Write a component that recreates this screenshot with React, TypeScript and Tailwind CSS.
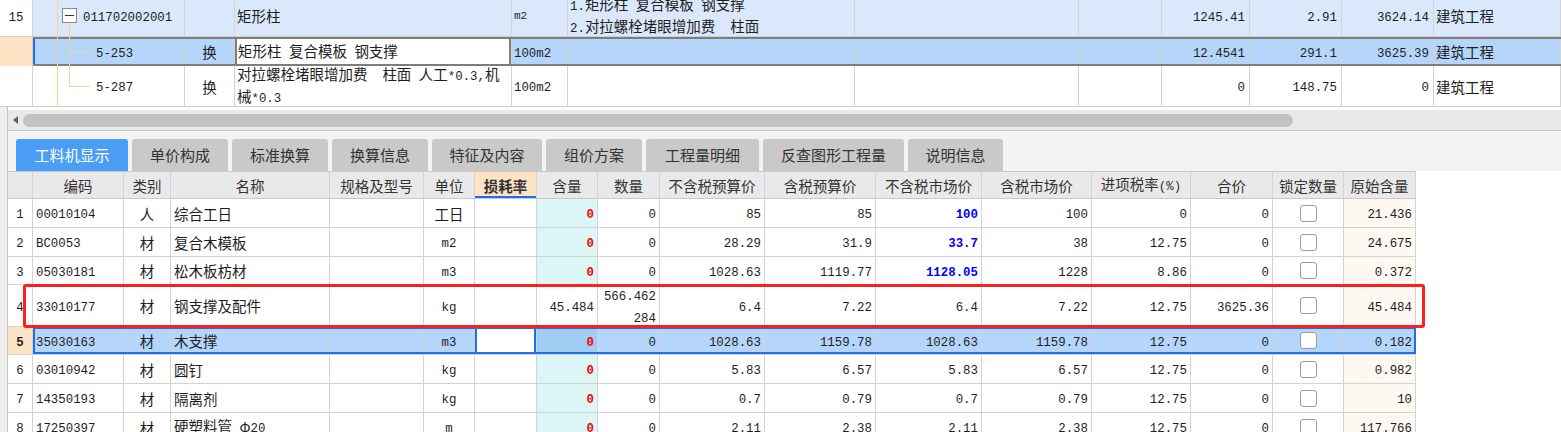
import React from "react";
import clsx from "clsx";

const ASCII = /^[\x20-\x7E]+$/;

function Txt({ s, bold }: { s: string; bold?: boolean }) {
  const parts = s.split(/([\x20-\x7E]+)/).filter((p) => p !== "");
  return (
    <span className={clsx(bold && "font-bold")}>
      {parts.map((p, i) =>
        ASCII.test(p) ? (
          <span
            key={i}
            className="whitespace-pre font-['Liberation_Mono',monospace] text-[12.4px]"
          >
            {p}
          </span>
        ) : (
          <span key={i} className="text-[14.5px]">
            {p}
          </span>
        ),
      )}
    </span>
  );
}

// top grid column widths
const TW = [
  "w-[33px]",
  "w-[152px]",
  "w-[50px]",
  "w-[277px]",
  "w-[56px]",
  "w-[287px]",
  "w-[224px]",
  "w-[83px]",
  "w-[88px]",
  "w-[92px]",
  "w-[92px]",
  "w-[127px]",
];

// bottom grid column widths
const BW = [
  "w-[25px]",
  "w-[91px]",
  "w-[47px]",
  "w-[159px]",
  "w-[94px]",
  "w-[51px]",
  "w-[62px]",
  "w-[61px]",
  "w-[62px]",
  "w-[105px]",
  "w-[111px]",
  "w-[106px]",
  "w-[110px]",
  "w-[99px]",
  "w-[82px]",
  "w-[71px]",
  "w-[72px]",
];

function Cell({
  w,
  className,
  children,
}: {
  w: string;
  className?: string;
  children?: React.ReactNode;
}) {
  return (
    <div
      className={clsx(
        "flex h-full shrink-0 items-center border-r border-[#d3d3d3] leading-[18px]",
        w,
        className,
      )}
    >
      {children}
    </div>
  );
}

const headers = [
  "",
  "编码",
  "类别",
  "名称",
  "规格及型号",
  "单位",
  "损耗率",
  "含量",
  "数量",
  "不含税预算价",
  "含税预算价",
  "不含税市场价",
  "含税市场价",
  "进项税率(%)",
  "合价",
  "锁定数量",
  "原始含量",
];

type Mat = {
  no: string;
  code: string;
  kind: string;
  name: string;
  unit: string;
  content: string;
  qty: string[];
  a: string;
  b: string;
  c: string;
  d: string;
  rate: string;
  total: string;
  orig: string;
  h: string;
  blue?: boolean;
  plain?: boolean;
  sel?: boolean;
};

const mats: Mat[] = [
  { no: "1", code: "00010104", kind: "人", name: "综合工日", unit: "工日", content: "0", qty: ["0"], a: "85", b: "85", c: "100", d: "100", rate: "0", total: "0", orig: "21.436", h: "h-[29px]", blue: true },
  { no: "2", code: "BC0053", kind: "材", name: "复合木模板", unit: "m2", content: "0", qty: ["0"], a: "28.29", b: "31.9", c: "33.7", d: "38", rate: "12.75", total: "0", orig: "24.675", h: "h-[29px]", blue: true },
  { no: "3", code: "05030181", kind: "材", name: "松木板枋材", unit: "m3", content: "0", qty: ["0"], a: "1028.63", b: "1119.77", c: "1128.05", d: "1228", rate: "8.86", total: "0", orig: "0.372", h: "h-[28px]", blue: true },
  { no: "4", code: "33010177", kind: "材", name: "钢支撑及配件", unit: "kg", content: "45.484", qty: ["566.462", "284"], a: "6.4", b: "7.22", c: "6.4", d: "7.22", rate: "12.75", total: "3625.36", orig: "45.484", h: "h-[42px]", plain: true },
  { no: "5", code: "35030163", kind: "材", name: "木支撑", unit: "m3", content: "0", qty: ["0"], a: "1028.63", b: "1159.78", c: "1028.63", d: "1159.78", rate: "12.75", total: "0", orig: "0.182", h: "h-[28px]", sel: true },
  { no: "6", code: "03010942", kind: "材", name: "圆钉", unit: "kg", content: "0", qty: ["0"], a: "5.83", b: "6.57", c: "5.83", d: "6.57", rate: "12.75", total: "0", orig: "0.982", h: "h-[29px]" },
  { no: "7", code: "14350193", kind: "材", name: "隔离剂", unit: "kg", content: "0", qty: ["0"], a: "0.7", b: "0.79", c: "0.7", d: "0.79", rate: "12.75", total: "0", orig: "10", h: "h-[29px]" },
  { no: "8", code: "17250397", kind: "材", name: "硬塑料管 φ20", unit: "m", content: "0", qty: ["0"], a: "2.11", b: "2.38", c: "2.11", d: "2.38", rate: "12.75", total: "0", orig: "117.766", h: "h-[29px]" },
];

const tabs = [
  ["工料机显示", "w-[112px]"],
  ["单价构成", "w-[96px]"],
  ["标准换算", "w-[96px]"],
  ["换算信息", "w-[96px]"],
  ["特征及内容", "w-[110px]"],
  ["组价方案", "w-[96px]"],
  ["工程量明细", "w-[113px]"],
  ["反查图形工程量", "w-[141px]"],
  ["说明信息", "w-[95px]"],
];

function Check() {
  return (
    <span className="h-[17px] w-[17px] rounded-[3px] border border-[#9b9b9b] bg-white" />
  );
}

function MatCells({ m }: { m: Mat }) {
  const num = "justify-end pr-[3px]";
  return (
    <>
      <Cell w={BW[1]} className="pl-[3px]">
        <Txt s={m.code} />
      </Cell>
      <Cell w={BW[2]} className="justify-center">
        <Txt s={m.kind} />
      </Cell>
      <Cell w={BW[3]} className="pl-[3px]">
        <Txt s={m.name} />
      </Cell>
      <Cell w={BW[4]} />
      <Cell w={BW[5]} className="justify-center">
        <Txt s={m.unit} />
      </Cell>
      <Cell
        w={BW[6]}
        className={clsx(m.sel && "bg-white shadow-[inset_0_0_0_2px_#1f6fe6]")}
      />
      <Cell
        w={BW[7]}
        className={clsx(
          num,
          m.sel ? "bg-[#a1cdf4]" : m.plain ? "bg-white" : "bg-[#dcf6f6]",
          !m.plain && "text-[#ff0000]",
        )}
      >
        <Txt s={m.content} bold={!m.plain} />
      </Cell>
      <Cell w={BW[8]} className="flex-col items-end justify-center pr-[3px]">
        {m.qty.map((q) => (
          <div key={q}>
            <Txt s={q} />
          </div>
        ))}
      </Cell>
      <Cell w={BW[9]} className={num}>
        <Txt s={m.a} />
      </Cell>
      <Cell w={BW[10]} className={num}>
        <Txt s={m.b} />
      </Cell>
      <Cell w={BW[11]} className={clsx(num, m.blue && "text-[#0000ff]")}>
        <Txt s={m.c} bold={m.blue} />
      </Cell>
      <Cell w={BW[12]} className={num}>
        <Txt s={m.d} />
      </Cell>
      <Cell w={BW[13]} className={num}>
        <Txt s={m.rate} />
      </Cell>
      <Cell w={BW[14]} className={num}>
        <Txt s={m.total} />
      </Cell>
      <Cell w={BW[15]} className="justify-center">
        <Check />
      </Cell>
      <Cell w={BW[16]} className={clsx(num, !m.sel && "bg-[#fdf8f1]")}>
        <Txt s={m.orig} />
      </Cell>
    </>
  );
}

export default function App() {
  return (
    <div className="relative h-[432px] w-[1561px] overflow-hidden bg-white font-['Noto_Sans_CJK_SC',sans-serif] text-[#1e1e1e]">
      {/* upper grid: list items */}
      <div className="relative h-[107px] overflow-hidden">
        <div className="-mt-[5px] flex h-[42px] border-b border-[#cfcfcf] bg-[#dbe8fb]">
          <Cell w={TW[0]} className="justify-center bg-white">
            <Txt s="15" />
          </Cell>
          <Cell w={TW[1]} className="pl-[50px]">
            <Txt s="011702002001" />
          </Cell>
          <Cell w={TW[2]} />
          <Cell w={TW[3]} className="pl-[2px]">
            <Txt s="矩形柱" />
          </Cell>
          <Cell w={TW[4]} className="pl-[2px]">
            <span className="font-['Liberation_Mono',monospace] text-[11px]">m2</span>
          </Cell>
          <Cell w={TW[5]} className="pl-[2px]">
            <div className="whitespace-nowrap">
              <div>
                <Txt s="1.矩形柱 复合模板 钢支撑" />
              </div>
              <div>
                <Txt s="2.对拉螺栓堵眼增加费  柱面" />
              </div>
            </div>
          </Cell>
          <Cell w={TW[6]} />
          <Cell w={TW[7]} />
          <Cell w={TW[8]} className="justify-end pr-[4px]">
            <Txt s="1245.41" />
          </Cell>
          <Cell w={TW[9]} className="justify-end pr-[4px]">
            <Txt s="2.91" />
          </Cell>
          <Cell w={TW[10]} className="justify-end pr-[4px]">
            <Txt s="3624.14" />
          </Cell>
          <Cell w={TW[11]} className="pl-[2px]">
            <Txt s="建筑工程" />
          </Cell>
        </div>

        <div className="flex h-[29px]">
          <Cell w={TW[0]} className="bg-[#fde3c3]" />
          <div className="flex h-full border-y-2 border-[#7d7d7d] bg-[#b5d5fb]">
            <Cell w={TW[1]} className="pl-[63px] shadow-[inset_2px_0_0_#1a6ee6]">
              <Txt s="5-253" />
            </Cell>
            <Cell w={TW[2]} className="justify-center">
              <Txt s="换" />
            </Cell>
            <Cell
              w={TW[3]}
              className="bg-white pl-[3px] shadow-[inset_2px_0_0_#7d7d7d,inset_-2px_0_0_#7d7d7d]"
            >
              <Txt s="矩形柱 复合模板 钢支撑" />
            </Cell>
            <Cell w={TW[4]} className="pl-[2px]">
              <Txt s="100m2" />
            </Cell>
            <Cell w={TW[5]} />
            <Cell w={TW[6]} />
            <Cell w={TW[7]} />
            <Cell w={TW[8]} className="justify-end pr-[4px]">
              <Txt s="12.4541" />
            </Cell>
            <Cell w={TW[9]} className="justify-end pr-[4px]">
              <Txt s="291.1" />
            </Cell>
            <Cell w={TW[10]} className="justify-end pr-[4px]">
              <Txt s="3625.39" />
            </Cell>
            <Cell w={TW[11]} className="pl-[2px]">
              <Txt s="建筑工程" />
            </Cell>
          </div>
        </div>

        <div className="flex h-[41px] border-b border-[#cfcfcf] bg-white">
          <Cell w={TW[0]} />
          <Cell w={TW[1]} className="pl-[63px]">
            <Txt s="5-287" />
          </Cell>
          <Cell w={TW[2]} className="justify-center">
            <Txt s="换" />
          </Cell>
          <Cell w={TW[3]} className="pl-[2px]">
            <div className="whitespace-nowrap">
              <div>
                <Txt s="对拉螺栓堵眼增加费  柱面 人工*0.3,机" />
              </div>
              <div>
                <Txt s="械*0.3" />
              </div>
            </div>
          </Cell>
          <Cell w={TW[4]} className="pl-[2px]">
            <Txt s="100m2" />
          </Cell>
          <Cell w={TW[5]} />
          <Cell w={TW[6]} />
          <Cell w={TW[7]} />
          <Cell w={TW[8]} className="justify-end pr-[4px]">
            <Txt s="0" />
          </Cell>
          <Cell w={TW[9]} className="justify-end pr-[4px]">
            <Txt s="148.75" />
          </Cell>
          <Cell w={TW[10]} className="justify-end pr-[4px]">
            <Txt s="0" />
          </Cell>
          <Cell w={TW[11]} className="pl-[2px]">
            <Txt s="建筑工程" />
          </Cell>
        </div>

        {/* tree lines */}
        <svg className="absolute left-0 top-0" width="100" height="107">
          <g stroke="#f6d19c" strokeWidth="1">
            <line x1="57.5" y1="0" x2="57.5" y2="107" />
            <line x1="69.5" y1="23" x2="69.5" y2="86.5" />
            <line x1="69.5" y1="51.5" x2="90" y2="51.5" />
            <line x1="69.5" y1="86.5" x2="90" y2="86.5" />
          </g>
          <rect x="62.5" y="8.5" width="14" height="14" fill="#fff" stroke="#8a8a8a" />
          <line x1="65" y1="15.5" x2="74" y2="15.5" stroke="#333" />
        </svg>
      </div>

      {/* lower part */}
      <div className="flex h-[325px]">
        <div className="w-[8px] shrink-0 border-r border-[#c4c4c4] bg-[#efefef]" />
        <div className="flex min-w-0 flex-1 flex-col">
          <div className="h-[3px] shrink-0 bg-white" />
          {/* horizontal scrollbar */}
          <div className="flex h-[21px] shrink-0 items-center border-b border-[#c6c6c6] bg-[#e9e9e9] pl-[5px]">
            <svg width="5" height="8" viewBox="0 0 5 8">
              <path d="M5 0 L0 4 L5 8 Z" fill="#5f5f5f" />
            </svg>
            <div className="ml-[5px] h-[13px] w-[1270px] rounded-full bg-[#c2c2c2]" />
          </div>
          {/* tabs */}
          <div className="flex h-[40px] shrink-0 items-end gap-[4px] bg-[#f3f3f3] pl-[8px]">
            {tabs.map(([label, w], i) => (
              <div
                key={label}
                className={clsx(
                  "flex h-[32px] items-center justify-center rounded-t-[3px] text-[15px]",
                  w,
                  i === 0 ? "bg-[#4b9ef6] text-white" : "bg-[#c9c9c9] text-[#333]",
                )}
              >
                {label}
              </div>
            ))}
          </div>
          {/* material grid */}
          <div className="flex h-[28px] w-[1408px] shrink-0 border-y border-[#c9c9c9] bg-[#e9e9e9] text-[#333]">
            {headers.map((h, i) => (
              <Cell
                key={i}
                w={BW[i]}
                className={clsx(
                  "justify-center",
                  i === 6 && "bg-[#fde3c3] shadow-[inset_0_-2px_0_#1f6fe6]",
                )}
              >
                <Txt s={h} bold={i === 6} />
              </Cell>
            ))}
          </div>
          {mats.map((m) =>
            m.sel ? (
              <div
                key={m.no}
                className={clsx("flex w-[1408px] shrink-0 border-b border-[#d3d3d3]", m.h)}
              >
                <Cell w={BW[0]} className="justify-center bg-[#fde3c3]">
                  <Txt s={m.no} bold />
                </Cell>
                <div className="flex h-full bg-[#b5d5fb] outline-2 -outline-offset-2 outline-[#1f6fe6]">
                  <MatCells m={m} />
                </div>
              </div>
            ) : (
              <div
                key={m.no}
                className={clsx("flex w-[1408px] shrink-0 border-b border-[#d3d3d3]", m.h)}
              >
                <Cell w={BW[0]} className="justify-center">
                  <Txt s={m.no} />
                </Cell>
                <MatCells m={m} />
              </div>
            ),
          )}
        </div>
      </div>

      {/* red highlight around row 4 */}
      <div className="absolute left-[23px] top-[284px] h-[44px] w-[1402px] rounded-[3px] border-[3px] border-[#ff1f1f]" />
    </div>
  );
}
